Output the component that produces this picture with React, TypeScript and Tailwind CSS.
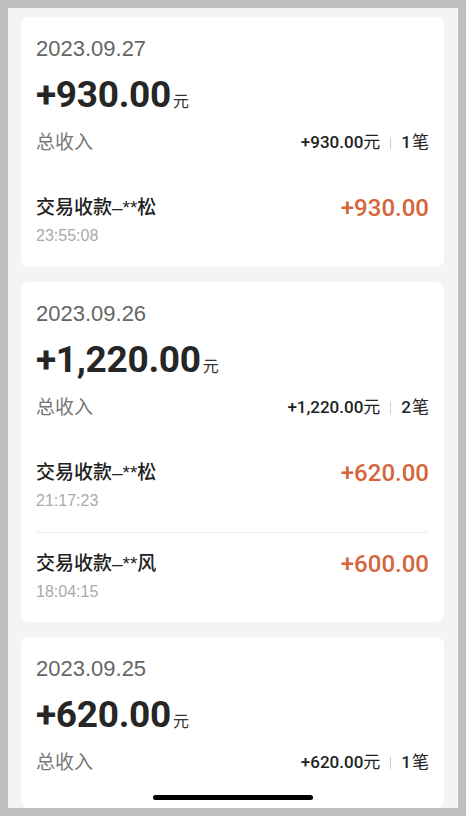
import React from "react";

type Tx = { name: string; time: string; amount: string };
type Day = { date: string; total: string; count: number; txs: Tx[] };

const days: Day[] = [
  {
    date: "2023.09.27",
    total: "+930.00",
    count: 1,
    txs: [{ name: "交易收款–**松", time: "23:55:08", amount: "+930.00" }],
  },
  {
    date: "2023.09.26",
    total: "+1,220.00",
    count: 2,
    txs: [
      { name: "交易收款–**松", time: "21:17:23", amount: "+620.00" },
      { name: "交易收款–**风", time: "18:04:15", amount: "+600.00" },
    ],
  },
  // last card is cut by the bottom of the screen, rows not visible
  { date: "2023.09.25", total: "+620.00", count: 1, txs: [] },
];

const sans = "font-['Liberation_Sans','Noto_Sans_CJK_SC',sans-serif]";
const num = "font-['Roboto','Noto_Sans_CJK_SC',sans-serif]";

function DayCard({ day, grow }: { day: Day; grow?: boolean }) {
  return (
    <div className={`rounded-[8px] bg-white px-[15px] pt-[17px] ${grow ? "flex-1" : "shrink-0"}`}>
      <div className={`flex h-[28px] items-center text-[22px] text-[#666666] ${sans}`}>
        {day.date}
      </div>
      <div className="mt-[10px] flex h-[45px] items-baseline">
        <span className={`text-[37px] font-bold tracking-[-0.3px] text-[#262626] leading-[45px] ${num}`}>
          {day.total}
        </span>
        <span className={`ml-[2px] text-[16px] text-[#333333] ${sans}`}>元</span>
      </div>
      <div className="mt-[12px] flex h-[28px] items-center justify-between">
        <span className={`text-[19px] text-[#777777] ${sans}`}>总收入</span>
        <div className="flex items-center text-[#222222]">
          <span className={`text-[17px] font-medium ${num}`}>{day.total}</span>
          <span className={`text-[17px] ${sans}`}>元</span>
          <span className="mx-[10px] h-[12px] w-px bg-[#cccccc]" />
          <span className={`text-[17px] font-medium ${num}`}>{day.count}</span>
          <span className={`ml-[1px] text-[17px] ${sans}`}>笔</span>
        </div>
      </div>
      <div className="mt-[20px]">
        {day.txs.map((tx, i) => (
          <div
            key={i}
            className={`h-[90px] pt-[19px] ${i > 0 ? "border-t border-[#eeeeee]" : ""}`}
          >
            <div className="flex h-[24px] items-center justify-between">
              <span className={`text-[19px] font-medium text-[#222222] ${sans}`}>{tx.name}</span>
              <span className={`text-[24px] font-medium text-[#d5653b] ${num}`}>{tx.amount}</span>
            </div>
            <div className={`mt-[6px] flex h-[20px] items-center text-[16px] text-[#aaaaaa] ${sans}`}>
              {tx.time}
            </div>
          </div>
        ))}
      </div>
    </div>
  );
}

export default function App() {
  return (
    <div className="h-[816px] w-[466px] bg-[#bfbfbf] p-[8px]">
      <div className="relative h-full w-full overflow-hidden bg-[#f4f4f4]">
        <div className="flex h-full flex-col gap-[15px] pl-[13px] pr-[14px] pt-[9px]">
          {days.map((d, i) => (
            <DayCard key={d.date} day={d} grow={i === days.length - 1} />
          ))}
        </div>
        <div className="absolute bottom-[8px] left-1/2 h-[5px] w-[160px] -translate-x-1/2 rounded-full bg-black" />
      </div>
    </div>
  );
}
